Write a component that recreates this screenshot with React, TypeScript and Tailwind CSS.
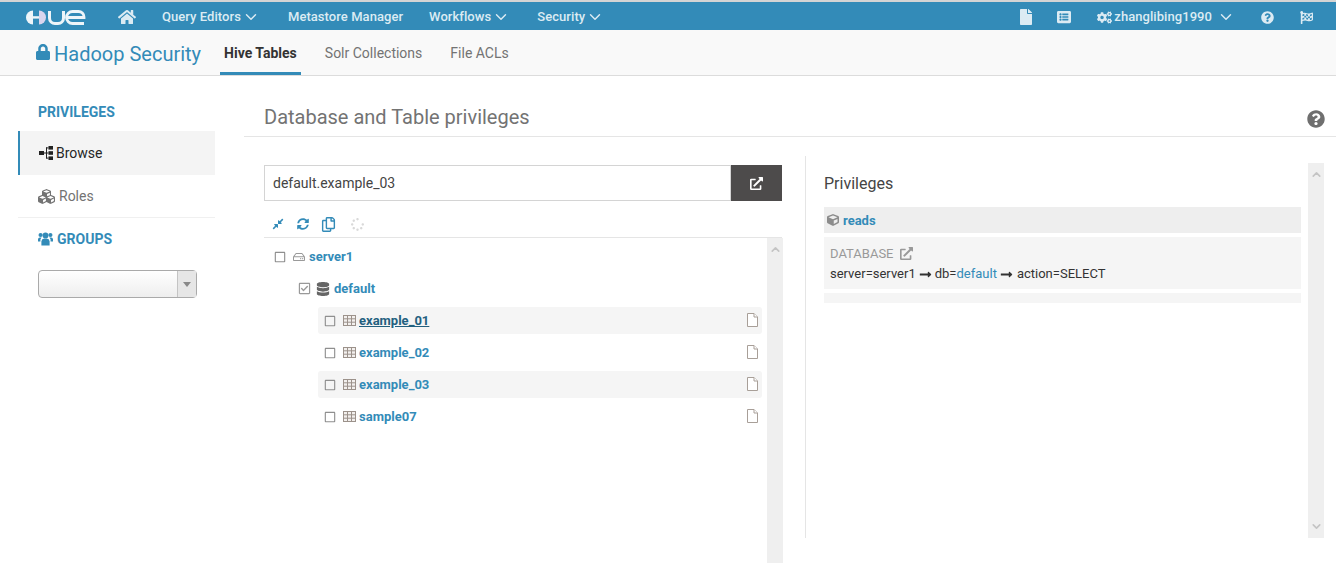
import { ChevronDown, ChevronUp } from "lucide-react";
import {
  FaCogs,
  FaCompressAlt,
  FaCube,
  FaCubes,
  FaDatabase,
  FaFile,
  FaFlagCheckered,
  FaHome,
  FaListAlt,
  FaLock,
  FaQuestionCircle,
  FaRegCheckSquare,
  FaRegCopy,
  FaRegHdd,
  FaRegSquare,
  FaSpinner,
  FaSyncAlt,
  FaExternalLinkAlt,
  FaLongArrowAltRight,
} from "react-icons/fa";

const tables = [
  { name: "example_01", active: true, underline: true },
  { name: "example_02", active: false, underline: false },
  { name: "example_03", active: true, underline: false },
  { name: "sample07", active: false, underline: false },
];

function HueLogo() {
  return (
    <svg width="60" height="15" viewBox="0 0 60 15" fill="none">
      <path d="M7 0.5 A7 7 0 0 0 7 14.5 Z" fill="#eef5f9" />
      <rect x="7" y="6.2" width="6" height="2.4" fill="#eef5f9" />
      <path d="M13 0.5 A7 7 0 0 1 13 14.5 Z" fill="#d9d5ee" />
      <path d="M23.5 1 V8 A5.5 5.5 0 0 0 29 13.5 H32 A5.5 5.5 0 0 0 37.5 8 V1" stroke="#eef5f9" strokeWidth="3" />
      <path d="M58 13.5 H46.5 A6 6 0 0 1 46.5 1.5 H52.5 A5.5 5.5 0 0 1 58 7 V7.5 H41.5" stroke="#eef5f9" strokeWidth="2.8" />
    </svg>
  );
}

function SitemapIcon() {
  return (
    <svg width="14" height="14" viewBox="0 0 14 14" className="text-[#222]" fill="currentColor">
      <rect x="0" y="5" width="5" height="4" />
      <rect x="9.5" y="0" width="4.5" height="3.6" />
      <rect x="9.5" y="5.2" width="4.5" height="3.6" />
      <rect x="9.5" y="10.4" width="4.5" height="3.6" />
      <rect x="5" y="6.5" width="4.5" height="1" />
      <rect x="7" y="1.4" width="1" height="11" />
      <rect x="7" y="1.4" width="2.5" height="1" />
      <rect x="7" y="11.6" width="2.5" height="1" />
    </svg>
  );
}

function UsersIcon() {
  return (
    <svg width="15" height="14" viewBox="0 0 15 14" fill="currentColor">
      <circle cx="7.5" cy="3.4" r="2.9" />
      <circle cx="2.6" cy="3" r="2.1" />
      <circle cx="12.4" cy="3" r="2.1" />
      <path d="M3.4 13.5 V9.2 A3 3 0 0 1 6.4 6.6 H8.6 A3 3 0 0 1 11.6 9.2 V13.5 Z" />
      <path d="M0 9.4 V7.2 A1.8 1.8 0 0 1 1.8 5.6 H3.6 A4 4 0 0 0 2.4 9.4 Z" />
      <path d="M15 9.4 V7.2 A1.8 1.8 0 0 0 13.2 5.6 H11.4 A4 4 0 0 1 12.6 9.4 Z" />
    </svg>
  );
}

function TableIcon() {
  return (
    <svg width="13" height="11" viewBox="0 0 13 11" fill="none" stroke="#9c928b" strokeWidth="1" className="shrink-0">
      <rect x="0.5" y="0.5" width="12" height="10" fill="#f3f0ee" />
      <path d="M4.5 0.5 V10.5 M8.5 0.5 V10.5 M0.5 3.8 H12.5 M0.5 7.2 H12.5" />
    </svg>
  );
}

function FileIcon() {
  return (
    <svg width="11" height="14" viewBox="0 0 11 14" fill="#fff" stroke="#a89f98" strokeWidth="1" className="mb-[2px] ml-auto shrink-0">
      <path d="M0.5 0.5 H7 L10.5 4 V13.5 H0.5 Z" />
      <path d="M7 0.5 V4 H10.5" />
    </svg>
  );
}

function NavItem({ label, caret }: { label: string; caret?: boolean }) {
  return (
    <span className="flex items-center gap-[1px] text-[13px] font-medium tracking-[0.06px] text-[#dcebf3]">
      {label}
      {caret && <ChevronDown size={18} strokeWidth={1.9} />}
    </span>
  );
}

function Scrollbar({ down }: { down?: boolean }) {
  return (
    <div className="flex w-4 shrink-0 flex-col items-center justify-between bg-[#efefef] py-[5px]">
      <ChevronUp size={13} strokeWidth={3} className="text-[#c4c4c4]" />
      {down && <ChevronDown size={13} strokeWidth={3} className="text-[#c4c4c4]" />}
    </div>
  );
}

export default function App() {
  return (
    <div className="flex h-[563px] flex-col overflow-hidden bg-white font-['Roboto',sans-serif] text-[14px] text-[#333]">
      {/* Top bar */}
      <header className="flex h-[30px] shrink-0 items-center border-t-2 border-[#d4d4d4] bg-[#338bb8] pl-[26px] pr-[23px] pt-[2px]">
        <HueLogo />
        <FaHome size={18} className="ml-[32px] text-[#dcebf3]" />
        <nav className="ml-[26px] flex items-center">
          <NavItem label="Query Editors" caret />
          <span className="ml-[28px]">
            <NavItem label="Metastore Manager" />
          </span>
          <span className="ml-[26px]">
            <NavItem label="Workflows" caret />
          </span>
          <span className="ml-[27px]">
            <NavItem label="Security" caret />
          </span>
        </nav>
        <div className="ml-auto flex items-center text-[#dcebf3]">
          <FaFile size={16} />
          <FaListAlt size={14} className="ml-[23px]" />
          <FaCogs size={15} className="ml-[26px]" />
          <span className="ml-[2px] text-[13px] font-medium tracking-[0.06px]">zhanglibing1990</span>
          <ChevronDown size={18} strokeWidth={1.9} className="ml-[5px]" />
          <FaQuestionCircle size={13} className="ml-[26px]" />
          <FaFlagCheckered size={13} className="ml-[26px]" />
        </div>
      </header>

      {/* Sub nav */}
      <div className="flex h-[46px] shrink-0 items-stretch border-b border-[#dcdcdc] bg-[#f9f9f9] pl-[35px]">
        <div className="flex items-center gap-[3px] pt-[2px] text-[20px] text-[#338bb8]">
          <FaLock size={16} className="mb-[3px]" />
          Hadoop Security
        </div>
        <div className="ml-[19px] flex items-center border-b-[3px] border-[#338bb8] px-[4px] pt-[4px] text-[14px] font-bold text-[#333]">
          Hive Tables
        </div>
        <div className="ml-[24px] flex items-center pt-[1px] text-[14px] text-[#737373]">Solr Collections</div>
        <div className="ml-[28px] flex items-center pt-[1px] text-[14px] text-[#737373]">File ACLs</div>
      </div>

      <div className="flex min-h-0 flex-1">
        {/* Sidebar */}
        <aside className="ml-[18px] w-[197px] shrink-0">
          <div className="pl-[20px] pt-[27px] text-[14px] font-bold leading-[18px] text-[#338bb8]">PRIVILEGES</div>
          <div className="mt-[10px] flex h-[44px] items-center gap-[3px] border-l-2 border-[#338bb8] bg-[#f4f4f4] pl-[19px] text-[14px] text-[#262626]">
            <SitemapIcon />
            Browse
          </div>
          <div className="flex h-[43px] items-center gap-[4px] border-b border-[#f0f0f0] pl-[20px] text-[14px] text-[#737373]">
            <FaCubes size={17} />
            Roles
          </div>
          <div className="flex items-center gap-[4px] pl-[20px] pt-[12px] text-[14px] font-bold leading-[18px] text-[#338bb8]">
            <UsersIcon />
            GROUPS
          </div>
          <div className="ml-[20px] mt-[22px] flex h-[28px] w-[159px] rounded-[4px] border border-[#aaa] bg-gradient-to-b from-white to-[#eeeeee]">
            <div className="flex-1" />
            <div className="flex w-[19px] items-center justify-center border-l border-[#c4c4c4] bg-[#e6e6e6]">
              <span className="mt-[1px] h-0 w-0 border-x-[4px] border-t-[5px] border-x-transparent border-t-[#888]" />
            </div>
          </div>
        </aside>

        {/* Main */}
        <main className="ml-[29px] flex min-w-0 flex-1 flex-col">
          <div className="flex h-[61px] shrink-0 items-end justify-between border-b border-[#e5e5e5] pb-[5px] pl-[20px] pr-[11px]">
            <h1 className="text-[20px] leading-[28px] text-[#737373]">Database and Table privileges</h1>
            <FaQuestionCircle size={18} className="mb-[3px] text-[#6f6f6f]" />
          </div>

          <div className="flex min-h-0 flex-1">
            {/* Left column */}
            <section className="ml-[20px] flex w-[519px] shrink-0 flex-col pt-[28px]">
              <div className="mr-[1px] flex h-[36px] shrink-0">
                <div className="flex flex-1 items-center border border-[#d4d4d4] pl-[8px] text-[14px] text-[#444]">
                  default.example_03
                </div>
                <div className="flex w-[51px] items-center justify-center bg-[#4d4b4b] text-white">
                  <FaExternalLinkAlt size={13} />
                </div>
              </div>
              <div className="mr-[1px] flex h-[37px] shrink-0 items-center gap-[13px] border-b border-[#e5e5e5] pl-[8px] pt-[10px] text-[#338bb8]">
                <FaCompressAlt size={12} />
                <FaSyncAlt size={12} />
                <FaRegCopy size={15} className="-ml-[1px]" />
                <FaSpinner size={13} className="ml-[2px] text-[#d9d9d9]" />
              </div>
              <div className="flex min-h-0 flex-1">
                <div className="min-w-0 flex-1 pr-[5px]">
                  <div className="flex h-[32px] items-center pl-[10px] pt-[5px] text-[13px] font-bold text-[#338bb8]">
                    <FaRegSquare size={12} className="text-[#8f8f8f]" />
                    <FaRegHdd size={12} className="ml-[7px] text-[#9a9a9a]" />
                    <span className="ml-[4px]">server1</span>
                  </div>
                  <div className="flex h-[32px] items-center pl-[34px] pt-[5px] text-[13px] font-bold text-[#338bb8]">
                    <FaRegCheckSquare size={13} className="text-[#999]" />
                    <FaDatabase size={14} className="ml-[5px] text-[#666]" />
                    <span className="ml-[4px]">default</span>
                  </div>
                  {tables.map((t) => (
                    <div
                      key={t.name}
                      className={`ml-[54px] mt-[5px] flex h-[27px] items-center rounded-[3px] pl-[6px] pr-[4px] text-[13px] font-bold ${
                        t.active ? "bg-[#f5f5f5]" : ""
                      } text-[#338bb8]`}
                    >
                      <FaRegSquare size={12} className="text-[#8f8f8f]" />
                      <span className="ml-[7px]">
                        <TableIcon />
                      </span>
                      <span className={`ml-[3px] ${t.underline ? "text-[#23607f] underline" : ""}`}>{t.name}</span>
                      <FileIcon />
                    </div>
                  ))}
                </div>
                <Scrollbar />
              </div>
            </section>

            <div className="mb-[25px] ml-[22px] mt-[19px] w-px shrink-0 bg-[#e5e5e5]" />

            {/* Right column */}
            <section className="mb-[25px] ml-[18px] mt-[26px] flex min-w-0 flex-1 pr-[12px]">
              <div className="min-w-0 flex-1 pr-[7px]">
                <h2 className="pt-[11px] text-[16px] leading-[20px] text-[#444]">Privileges</h2>
                <div className="mt-[13px] flex h-[26px] items-center gap-[4px] bg-[#eeeeee] pl-[3px] pt-[2px] text-[13px] font-bold text-[#338bb8]">
                  <FaCube size={12} className="mb-[2px] text-[#8c8c8c]" />
                  reads
                </div>
                <div className="mt-[4px] h-[52px] bg-[#f5f5f5] pl-[6px] pt-[8px]">
                  <div className="flex items-center gap-[7px] text-[13px] leading-[18px] text-[#999]">
                    DATABASE
                    <FaExternalLinkAlt size={13} className="mb-[2px]" />
                  </div>
                  <div className="flex items-center gap-[3px] pt-[1px] text-[13px] leading-[20px] text-[#333]">
                    server=server1
                    <FaLongArrowAltRight size={13} />
                    <span>
                      db=<span className="text-[#338bb8]">default</span>
                    </span>
                    <FaLongArrowAltRight size={13} />
                    <span className="ml-[1px]">action=SELECT</span>
                  </div>
                </div>
                <div className="mt-[4px] h-[10px] bg-[#f5f5f5]" />
              </div>
              <Scrollbar down />
            </section>
          </div>
        </main>
      </div>
    </div>
  );
}
